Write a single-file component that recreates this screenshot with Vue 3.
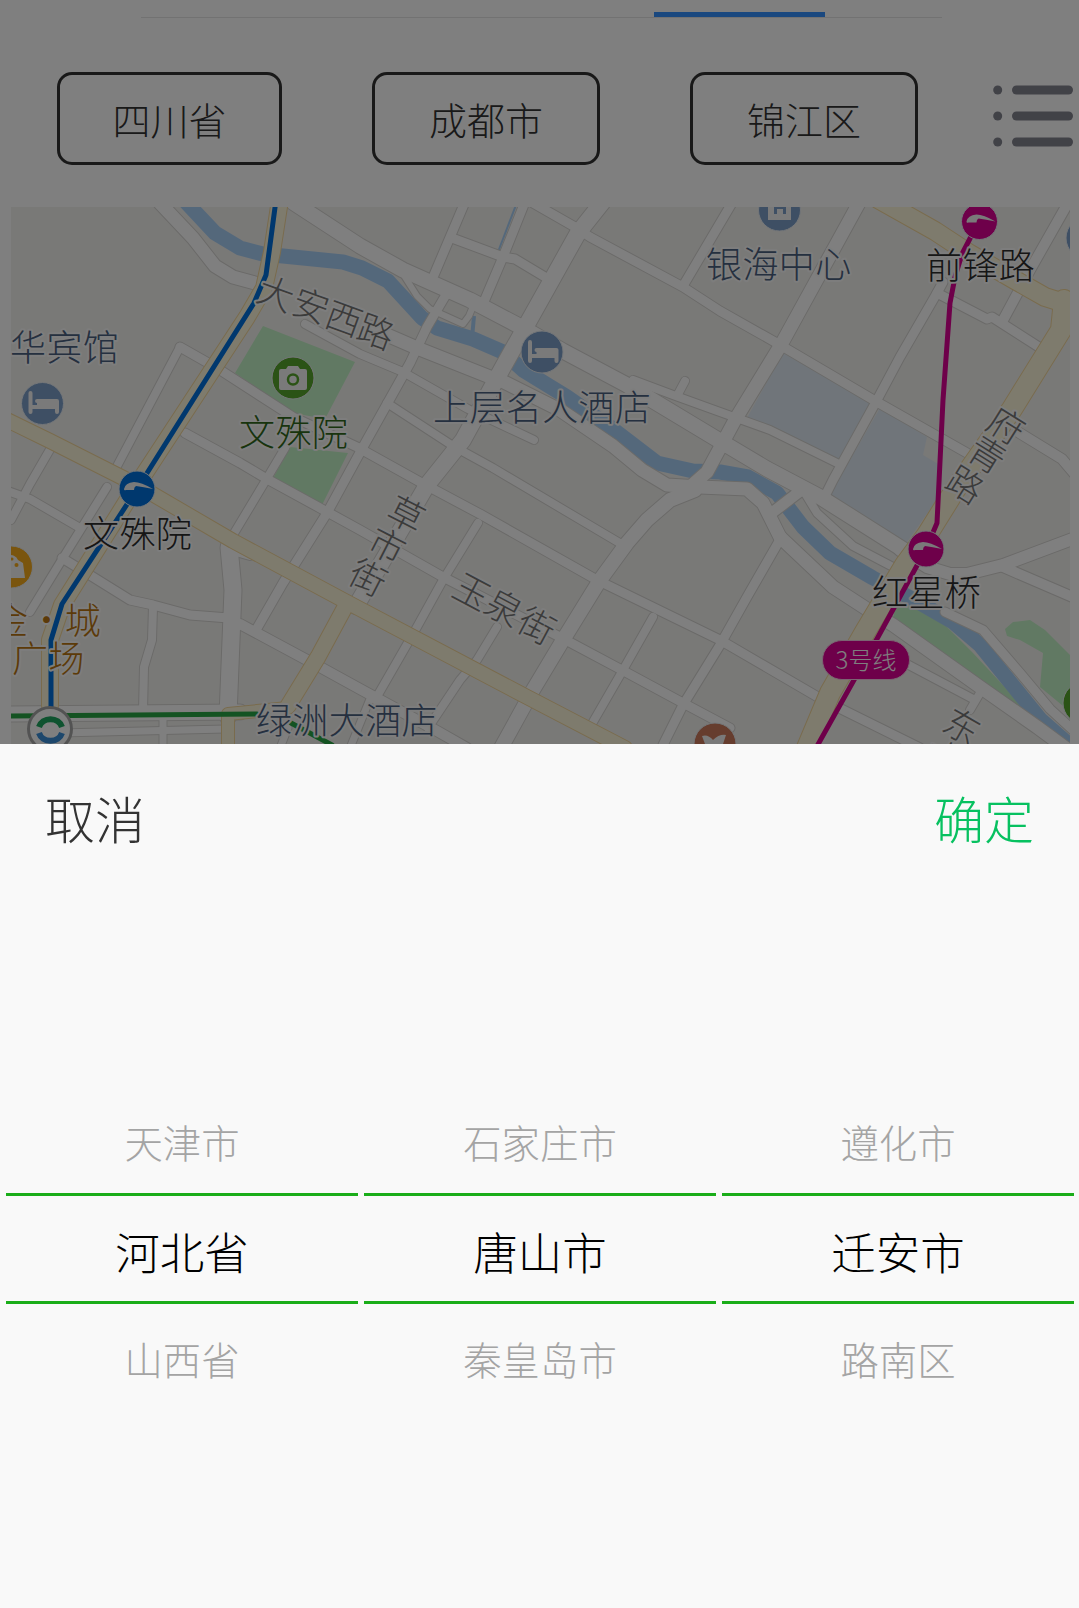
<script setup>
const regions = ['四川省', '成都市', '锦江区']

const columns = [
  { before: '天津市', current: '河北省', after: '山西省' },
  { before: '石家庄市', current: '唐山市', after: '秦皇岛市' },
  { before: '遵化市', current: '迁安市', after: '路南区' },
]

// Streets: [width, polyline points]
const streets = [
  [13, '160,203 193,238 215,266 233,277 262,285'],
  [15, '294,203 360,246 403,270 470,300 523,328 563,351 627,385 720,441 767,469 820,497 907,552'],
  [12, '900,550 927,567 950,574 967,574 1003,565 1075,538'],
  [8, '305,324 360,354 403,372 468,409 534,440'],
  [13, '370,327 387,335 417,348 490,377 502,381 560,410 613,446 642,470 667,485 700,487 747,489 763,503 780,537 833,587 873,613 893,625 980,687 1037,727 1075,755'],
  [16, '605,199 578,233 503,367 463,440 427,485 395,540 356,606'],
  [9, '465,202 434,275'],
  [9, '447,293 427,327 410,363 363,447 327,513 283,583 256,630'],
  [9, '525,202 503,257 483,304'],
  [9, '452,238 503,257 515,259 550,280'],
  [6, '403,274 417,296 430,309 463,324 469,316 474,304'],
  [9, '533,203 575,227 590,237 683,287 720,311 775,342 877,402 967,453'],
  [9, '732,203 683,286'],
  [13, '859,203 782,343 735,420 707,472 690,487'],
  [14, '695,490 670,500 647,520 627,543 600,580 563,640 533,690 501,748'],
  [10, '1068,203 1030,270 1002,322'],
  [9, '943,282 937,293 900,357 877,400 833,480 823,500'],
  [9, '937,293 987,319 992,317 1042,349'],
  [8, '633,380 673,395 720,412 770,430 837,463'],
  [8, '685,381 677,396'],
  [10, '1018,432 1062,459 1078,478'],
  [10, '1003,567 1075,598'],
  [8, '803,490 817,513 853,546 893,567'],
  [9, '945,612 983,630 1020,673 1050,709 1075,732'],
  [11, '799,492 773,512'],
  [9, '782,536 747,597 720,645 683,705 663,745'],
  [8, '180,347 115,470'],
  [9, '180,347 217,368 293,417 357,447 420,482 480,514 597,580 720,640 823,700 920,748'],
  [8, '387,403 453,446 493,468 623,545'],
  [9, '185,433 240,463 267,479 320,508 360,530 443,577 560,637 620,669 683,703 730,728'],
  [8, '285,448 263,485 233,535'],
  [8, '478,523 443,580 417,627 375,700'],
  [8, '497,627 477,660 460,680 428,728'],
  [8, '653,617 623,670 593,722'],
  [10, '240,624 320,667 360,689 437,731 467,748'],
  [17, '229,547 233,590 228,716'],
  [8, '229,550 250,556'],
  [9, '62,558 93,577 130,600 153,605 190,615 229,618'],
  [8, '153,607 152,640 144,667 143,712'],
  [8, '107,487 63,558 30,612'],
  [8, '52,446 30,484 11,520'],
  [8, '5,490 30,499 80,528'],
  [8, '905,663 975,700'],
  [8, '980,693 970,710'],
  [15, '5,714 240,712'],
  [7, '60,733 225,729'],
  [7, '163,716 163,750'],
  [7, '370,699 350,748'],
  [7, '288,728 280,748'],
]

const avenues = [
  [14, '5,419 50,441 137,485 233,541 343,600 360,609 527,697 625,748'],
  [16, '280,200 272,252 264,288 247,317 137,485 62,605 50,640 50,706'],
  [15, '345,607 318,657 288,706'],
  [12, '288,708 228,714 228,748'],
  [18, '878,199 935,231 970,254 1015,280 1045,297 1080,308'],
  [20, '1064,300 1061,330 1012,409 955,490 927,535 905,565 865,632 830,693 804,755'],
]

const blocks = [
  ['park', '263,326 355,362 325,419 293,413 235,373'],
  ['park', '290,447 348,453 322,505 272,480'],
  ['park', '895,605 920,606 947,627 973,653 1030,714 970,677 893,620'],
  ['park', '1005,629 1013,622 1030,620 1045,630 1075,660 1075,716 1040,687 1043,653 1020,640 1007,636'],
  ['campus', '783,353 872,403 838,460 747,418'],
  ['campus', '880,408 927,437 923,455 940,465 940,495 905,545 827,500'],
]

const labels = [
  { t: '华宾馆', x: 10, y: 361, k: 'poi' },
  { t: '上层名人酒店', x: 433, y: 421, k: 'poi' },
  { t: '银海中心', x: 706, y: 278, k: 'poi' },
  { t: '绿洲大酒店', x: 256, y: 734, k: 'poi' },
  { t: '文殊院', x: 239, y: 446, k: 'scenic' },
  { t: '文殊院', x: 83, y: 547, k: 'station' },
  { t: '前锋路', x: 926, y: 279, k: 'station' },
  { t: '红星桥', x: 872, y: 606, k: 'station' },
  { t: '金·城', x: -8, y: 634, k: 'shop' },
  { t: '广场', x: 12, y: 672, k: 'shop' },
]

// Street name characters: [char, centre x, centre y, rotation]
const streetChars = [
  ['大', 276, 294, 20], ['安', 311, 306, 20], ['西', 344, 319, 20], ['路', 376, 332, 20],
  ['草', 406, 515, 27], ['市', 387, 546, 27], ['街', 368, 578, 27],
  ['玉', 472, 592, 28], ['泉', 504, 608, 28], ['街', 537, 626, 28],
  ['府', 1006, 426, 32], ['青', 987, 455, 32], ['路', 965, 485, 32],
  ['东', 962, 727, 30], ['大', 943, 757, 30],
]
</script>

<template>
  <div class="screen">
    <div class="page">
      <div class="tabs"><span class="tab-ink"></span></div>
      <div class="filters">
        <div class="region-list">
          <button v-for="r in regions" :key="r" class="region">{{ r }}</button>
        </div>
        <svg class="menu" width="80" height="62" viewBox="0 0 80 62">
          <g fill="#83848f">
            <circle cx="4.7" cy="5" r="4.5" /><circle cx="4.7" cy="31" r="4.5" /><circle cx="4.7" cy="57" r="4.5" />
            <rect x="19" y=".5" width="61" height="9" rx="4.5" />
            <rect x="19" y="26.500" width="61" height="9" rx="4.5" />
            <rect x="19" y="52.500" width="61" height="9" rx="4.5" />
          </g>
        </svg>
      </div>

      <svg class="map" viewBox="11 207 1059 537" width="1059" height="537">
        <rect x="11" y="207" width="1059" height="537" fill="#f3f2ef" />
        <polygon v-for="(b, i) in blocks" :key="'b' + i" :class="b[0]" :points="b[1]" />
        <g class="water">
          <polyline stroke-width="15" points="184,200 215,233 240,248 263,254 283,256 343,262 362,268 388,281 422,318 437,328 473,339 503,352 523,370 567,397 610,427 657,463 693,471 720,472 748,477 777,493 803,527 830,553 873,578 920,603 953,622 980,645 1010,682 1040,719 1075,750" />
          <polyline stroke-width="2" points="516,205 498,252" />
          <polyline stroke-width="4" points="474,316 472,338" />
        </g>
        <g class="line">
          <polyline v-for="(s, i) in streets" :key="'c' + i" stroke="#d6d5d2" :stroke-width="s[0] + 2" :points="s[1]" />
          <polyline v-for="(s, i) in streets" :key="'f' + i" stroke="#ffffff" :stroke-width="s[0]" :points="s[1]" />
          <polyline v-for="(s, i) in avenues" :key="'g' + i" stroke="#f3d79b" :stroke-width="s[0] + 2" :points="s[1]" />
          <polyline v-for="(s, i) in avenues" :key="'h' + i" stroke="#fdf6da" :stroke-width="s[0]" :points="s[1]" />
          <polyline stroke="#0070dc" stroke-width="5" points="276,200 266,275 254,303 137,489 62,604 51,640 51,712" />
          <polyline stroke="#dc0094" stroke-width="5" points="979,221 962,254 955,277 950,303 943,400 937,523 926,549 878,637 816,748" />
          <polyline stroke="#29a744" stroke-width="5" points="5,716 257,714" />
          <polyline stroke="#29a744" stroke-width="5" points="291,723 332,745" />
        </g>

        <g class="badges">
          <circle cx="42.500" cy="403.500" r="21" fill="#7d9fc8" />
          <circle cx="542" cy="352" r="21" fill="#7d9fc8" />
          <circle cx="779.500" cy="210" r="21" fill="#7d9fc8" />
          <circle cx="1087" cy="238" r="21" fill="#7d9fc8" />
          <circle cx="293" cy="378" r="21" fill="#57a62c" />
          <circle cx="1084" cy="703" r="21" fill="#57a62c" />
          <circle cx="11.500" cy="567" r="21" fill="#f5ab1c" />
          <circle cx="715" cy="744" r="21" fill="#cd7b5c" />
          <circle cx="137" cy="489" r="18" fill="#0070dc" />
          <circle cx="979.500" cy="221.500" r="18" fill="#dc0094" />
          <circle cx="926" cy="549" r="18" fill="#dc0094" />
        </g>
        <g fill="none" stroke="#f4f4f4" stroke-width="4" stroke-linecap="round" stroke-linejoin="round">
          <path d="M30.500 393v19M30.500 407H57v5M37 401H57v6" />
          <path d="M530 342v19M530 356H556.500v5M536.500 350H556.500v6" />
        </g>
        <path d="M37 400h21v8H37zM536.500 349h21v8h-21z" fill="#f4f4f4" />
        <path d="M768 205h6v9h3v-5h6v5h3v-9h5v15h-23z" fill="#f4f4f4" />
        <path d="M281 369h5l2-3h10l2 3h5q2 0 2 2v17q0 2-2 2h-24q-2 0-2-2v-17q0-2 2-2z" fill="#f4f4f4" />
        <circle cx="293" cy="379.500" r="5" fill="none" stroke="#57a62c" stroke-width="2.500" />
        <path d="M8 578h17l-2-15-5-3a7 7 0 0 0-10-4z" fill="#f4f4f4" />
        <circle cx="16.500" cy="565" r="2" fill="#f5ab1c" /><circle cx="12" cy="559" r="1.500" fill="#f5ab1c" />
        <path d="M702 736q6-2 11 4 6-6 13-5l-3 9h-18z" fill="#f4f4f4" />
        <g fill="#f4f4f4">
          <path d="M124 489q1-6 10-7 7 0 19 7-10-2-17-3-2 1-2 4h-8q-2 1-2-1z" />
          <path d="M966.500 221.500q1-6 10-7 7 0 19 7-10-2-17-3-2 1-2 4h-8q-2 1-2-1z" />
          <path d="M913 549q1-6 10-7 7 0 19 7-10-2-17-3-2 1-2 4h-8q-2 1-2-1z" />
        </g>
        <circle cx="50" cy="729" r="21.500" fill="#fff" stroke="#a7a7a7" stroke-width="3" />
        <path d="M39 727a12 11 0 0 1 23 0" fill="none" stroke="#1ea760" stroke-width="6" />
        <path d="M39 733a12 11 0 0 0 23 0" fill="none" stroke="#3a8fd8" stroke-width="6" />

        <rect x="822.500" y="640.500" width="87" height="39" rx="19.500" fill="#dc0094" stroke="#f6c9e4" stroke-width="1" />
        <text class="pill" x="866" y="669" text-anchor="middle">3号线</text>

        <text v-for="(l, i) in labels" :key="'l' + i" class="label" :class="l.k" :x="l.x" :y="l.y">{{ l.t }}</text>
        <text
          v-for="(c, i) in streetChars" :key="'s' + i" class="label street"
          text-anchor="middle" :transform="`translate(${c[1]} ${c[2]}) rotate(${c[3]})`" y="13"
        >{{ c[0] }}</text>
      </svg>
    </div>
    <div class="mask"></div>

    <div class="picker">
      <div class="picker-bar">
        <span class="cancel">取消</span>
        <span class="confirm">确定</span>
      </div>
      <div class="wheels">
        <div v-for="c in columns" :key="c.current" class="wheel">
          <div class="item">{{ c.before }}</div>
          <div class="item current">{{ c.current }}</div>
          <div class="item">{{ c.after }}</div>
        </div>
      </div>
    </div>
  </div>
</template>

<style>
body { margin: 0; }
</style>

<style scoped>
.screen {
  position: relative;
  display: flex;
  flex-direction: column;
  width: 1079px;
  height: 1608px;
  overflow: hidden;
  background: #fff;
  font-family: "Noto Sans CJK SC", "Noto Sans", sans-serif;
  font-weight: 300;
}
.page { height: 744px; flex: none; }
.mask {
  position: absolute;
  inset: 0 0 auto 0;
  height: 744px;
  background: rgba(0, 0, 0, 0.5);
}
.tabs {
  box-sizing: border-box;
  width: 801px;
  height: 18px;
  margin-left: 141px;
  padding: 12px 0 0 513px;
  border-bottom: 1px solid #e4e4e4;
}
.tab-ink {
  display: block;
  width: 171px;
  height: 5px;
  background: #3490ff;
}
.filters {
  display: flex;
  align-items: flex-start;
  justify-content: space-between;
  box-sizing: border-box;
  height: 189px;
  padding: 54px 6px 0 57px;
}
.region-list { display: flex; gap: 90px; }
.region {
  box-sizing: border-box;
  width: 228px;
  height: 93px;
  padding: 0;
  border: 3px solid #333;
  border-radius: 15px;
  background: none;
  color: #333;
  font: inherit;
  font-size: 38px;
  line-height: 87px;
}
.region:first-child { width: 225px; }
.menu { margin-top: 13px; }
.map { display: block; margin-left: 11px; }
.park { fill: #c3f2c6; }
.campus { fill: #e0ebf5; }
.water polyline { fill: none; stroke: #a9d1f7; stroke-linejoin: round; }
.line polyline { fill: none; stroke-linejoin: round; stroke-linecap: round; }
.badges circle { stroke: #e8edf2; stroke-width: 1; }
.label {
  font-size: 36px;
  letter-spacing: 0.4px;
  paint-order: stroke;
  stroke: #fbfbfa;
  stroke-width: 4px;
  stroke-linejoin: round;
}
.poi { fill: #4a6080; }
.scenic { fill: #30681a; }
.station { fill: #2c2c2c; }
.shop { fill: #b87410; }
.street { fill: #777; }
.pill { font-size: 24px; fill: #fff; }
.picker {
  flex: 1;
  display: flex;
  flex-direction: column;
  background: #f9f9f9;
}
.picker-bar {
  display: flex;
  justify-content: space-between;
  padding: 0 45px;
  font-size: 50px;
  line-height: 146px;
}
.cancel { color: #333; }
.confirm { color: #07c160; }
.wheels {
  display: flex;
  gap: 6px;
  padding: 197px 5px 0 6px;
}
.wheel { flex: 1; text-align: center; }
.item {
  height: 106px;
  line-height: 108px;
  font-size: 38.400px;
  color: #a4a4a4;
}
.current {
  height: 105px;
  line-height: 110px;
  border-top: 3px solid #1aad19;
  border-bottom: 3px solid #1aad19;
  font-size: 44.500px;
  color: #000;
}
</style>
